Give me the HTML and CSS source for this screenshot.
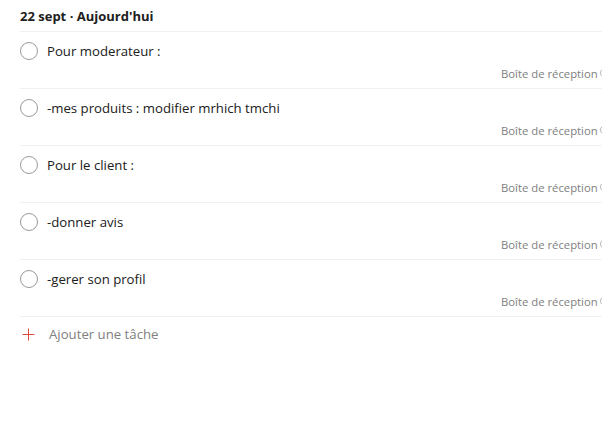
FILE: index.html
```html
<!DOCTYPE html>
<html lang="fr">
<head>
<meta charset="utf-8">
<title>Aujourd'hui</title>
<link rel="stylesheet" href="styles.css">
</head>
<body>
<section class="day">
  <header class="day-header">22 sept · Aujourd'hui</header>
  <ul class="tasks">
    <li class="task">
      <div class="task-main"><span class="check"></span><span class="task-text">Pour moderateur :</span></div>
      <div class="task-meta"><span>Boîte de réception</span><span class="dot"></span></div>
    </li>
    <li class="task">
      <div class="task-main"><span class="check"></span><span class="task-text">-mes produits : modifier mrhich tmchi</span></div>
      <div class="task-meta"><span>Boîte de réception</span><span class="dot"></span></div>
    </li>
    <li class="task">
      <div class="task-main"><span class="check"></span><span class="task-text">Pour le client :</span></div>
      <div class="task-meta"><span>Boîte de réception</span><span class="dot"></span></div>
    </li>
    <li class="task">
      <div class="task-main"><span class="check"></span><span class="task-text">-donner avis</span></div>
      <div class="task-meta"><span>Boîte de réception</span><span class="dot"></span></div>
    </li>
    <li class="task">
      <div class="task-main"><span class="check"></span><span class="task-text">-gerer son profil</span></div>
      <div class="task-meta"><span>Boîte de réception</span><span class="dot"></span></div>
    </li>
  </ul>
  <div class="add-task">
    <svg class="plus" width="13" height="13" viewBox="0 0 13 13"><path d="M6.5 0.5v12M0.5 6.5h12" stroke="#dc4c3e" stroke-width="1" fill="none"/></svg>
    <span>Ajouter une tâche</span>
  </div>
</section>
</body>
</html>
```
FILE: styles.css
```css
html, body {
  margin: 0;
  padding: 0;
  background: #ffffff;
  overflow: hidden;
}
body {
  font-family: "Open Sans", "Noto Sans", sans-serif;
  color: #202020;
  font-size: 13px;
}
.day {
  margin-left: 20px;
}
.day-header {
  font-weight: 700;
  font-size: 13px;
  line-height: 20px;
  padding: 6px 0 5px;
  border-bottom: 1px solid #f0f0f0;
}
.tasks {
  list-style: none;
  margin: 0;
  padding: 0;
}
.task {
  padding: 9px 0 7px;
  border-bottom: 1px solid #f0f0f0;
}
.task-main {
  display: flex;
  align-items: center;
  height: 20px;
}
.check {
  width: 18px;
  height: 18px;
  border: 1px solid #999999;
  border-radius: 50%;
  box-sizing: border-box;
  flex: none;
}
.task-text {
  margin-left: 9px;
  font-size: 13.2px;
  line-height: 20px;
  white-space: nowrap;
}
.task-meta {
  margin-top: 4px;
  height: 16px;
  display: flex;
  align-items: center;
  padding-left: 481px;
  font-size: 11.3px;
  color: #808080;
  white-space: nowrap;
}
.dot {
  width: 8px;
  height: 8px;
  border-radius: 50%;
  border: 1px solid #b8b8b8;
  margin-left: 2px;
  flex: none;
}
.add-task {
  display: flex;
  align-items: center;
  height: 20px;
  padding-top: 7px;
  color: #808080;
  font-size: 13.2px;
}
.plus {
  margin-left: 2px;
  flex: none;
}
.add-task span {
  margin-left: 14px;
}
```
